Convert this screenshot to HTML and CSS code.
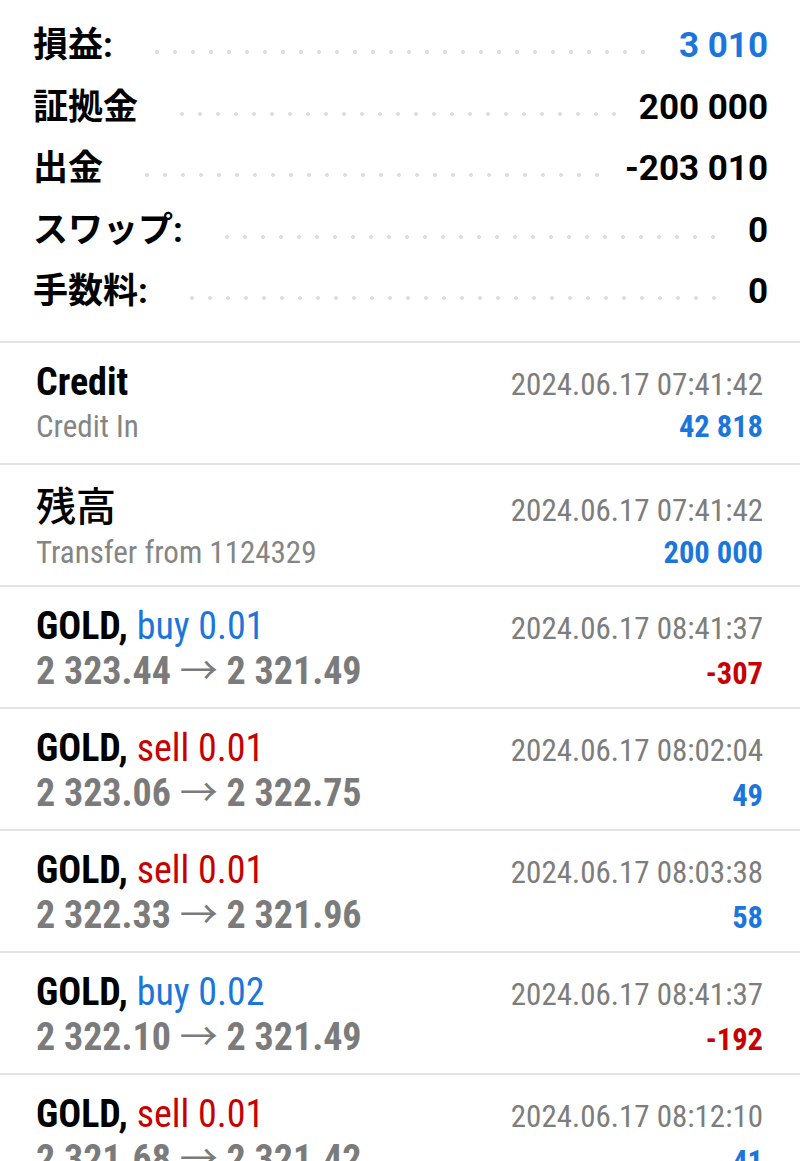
FILE: index.html
```html
<!DOCTYPE html>
<html lang="ja">
<head>
<meta charset="utf-8">
<title>履歴</title>
<link rel="stylesheet" href="styles.css">
</head>
<body>
<section class="summary">
  <div class="srow"><span class="slabel">損益:</span><span class="dots"></span><span class="sval blue">3 010</span></div>
  <div class="srow"><span class="slabel">証拠金</span><span class="dots"></span><span class="sval">200 000</span></div>
  <div class="srow"><span class="slabel">出金</span><span class="dots"></span><span class="sval">-203 010</span></div>
  <div class="srow"><span class="slabel">スワップ:</span><span class="dots"></span><span class="sval">0</span></div>
  <div class="srow"><span class="slabel">手数料:</span><span class="dots"></span><span class="sval">0</span></div>
</section>
<ul class="deals">
  <li class="deal">
    <div class="line1"><span class="title">Credit</span><span class="time">2024.06.17 07:41:42</span></div>
    <div class="line2"><span class="sub">Credit In</span><span class="amt blue">42 818</span></div>
  </li>
  <li class="deal">
    <div class="line1"><span class="title cjk">残高</span><span class="time">2024.06.17 07:41:42</span></div>
    <div class="line2"><span class="sub">Transfer from 1124329</span><span class="amt blue">200 000</span></div>
  </li>
  <li class="deal">
    <div class="line1"><span class="title">GOLD, <span class="side blue">buy 0.01</span></span><span class="time">2024.06.17 08:41:37</span></div>
    <div class="line2"><span class="price">2 323.44 <span class="arrow">→</span> 2 321.49</span><span class="amt red">-307</span></div>
  </li>
  <li class="deal">
    <div class="line1"><span class="title">GOLD, <span class="side red">sell 0.01</span></span><span class="time">2024.06.17 08:02:04</span></div>
    <div class="line2"><span class="price">2 323.06 <span class="arrow">→</span> 2 322.75</span><span class="amt blue">49</span></div>
  </li>
  <li class="deal">
    <div class="line1"><span class="title">GOLD, <span class="side red">sell 0.01</span></span><span class="time">2024.06.17 08:03:38</span></div>
    <div class="line2"><span class="price">2 322.33 <span class="arrow">→</span> 2 321.96</span><span class="amt blue">58</span></div>
  </li>
  <li class="deal">
    <div class="line1"><span class="title">GOLD, <span class="side blue">buy 0.02</span></span><span class="time">2024.06.17 08:41:37</span></div>
    <div class="line2"><span class="price">2 322.10 <span class="arrow">→</span> 2 321.49</span><span class="amt red">-192</span></div>
  </li>
  <li class="deal">
    <div class="line1"><span class="title">GOLD, <span class="side red">sell 0.01</span></span><span class="time">2024.06.17 08:12:10</span></div>
    <div class="line2"><span class="price">2 321.68 <span class="arrow">→</span> 2 321.42</span><span class="amt blue">41</span></div>
  </li>
</ul>
</body>
</html>
```
FILE: styles.css
```css
html, body {
  margin: 0;
  padding: 0;
  background: #ffffff;
}
body {
  font-family: Roboto, "Noto Sans CJK JP", sans-serif;
  color: #000;
  overflow: hidden;
}
.blue { color: #1b76dc; }
.red { color: #c70000; }

.summary {
  height: 341px;
  box-sizing: border-box;
  padding: 15px 32px 0 33px;
}
.srow {
  display: flex;
  align-items: baseline;
  height: 61.5px;
  line-height: 61.5px;
}
.slabel {
  font-family: Roboto, "Noto Sans CJK JP", sans-serif;
  font-size: 35px;
  font-weight: 700;
}
.sval {
  font-size: 35px;
  font-weight: 700;
}
.dots {
  flex: 1;
  height: 4px;
  padding-bottom: 3px;
  margin: 0 22px 0 42px;
  background-image: radial-gradient(circle at 2px 2px, #dedede 1.6px, rgba(222,222,222,0) 2.3px);
  background-size: 18px 4px;
  background-repeat: repeat-x;
  background-origin: content-box;
  background-clip: content-box;
}

.deals {
  list-style: none;
  margin: 0;
  padding: 0;
  font-family: "Roboto Condensed", "Liberation Sans Narrow", Roboto, "Noto Sans CJK JP", sans-serif;
  font-stretch: 75%;
}
.deal {
  box-sizing: border-box;
  height: 122px;
  border-top: 2px solid #e4e4e4;
  padding: 19px 37px 0 36px;
}
.line1, .line2 {
  display: flex;
  justify-content: space-between;
  align-items: baseline;
}
.line1 { line-height: 40px; }
.line2 { line-height: 44px; }
.title {
  font-size: 38px;
  font-weight: 700;
}
.title.cjk { font-family: "Noto Sans CJK JP", sans-serif; font-weight: 500; font-size: 40px; }
.side { font-weight: 400; }
.time {
  font-size: 31px;
  color: #7d7d7d;
}
.sub {
  font-size: 31px;
  color: #858585;
}
.price {
  font-size: 38px;
  font-weight: 700;
  color: #7b7b7b;
}
.arrow { font-weight: 400; }
.amt {
  font-size: 30.5px;
  font-weight: 700;
}
```
